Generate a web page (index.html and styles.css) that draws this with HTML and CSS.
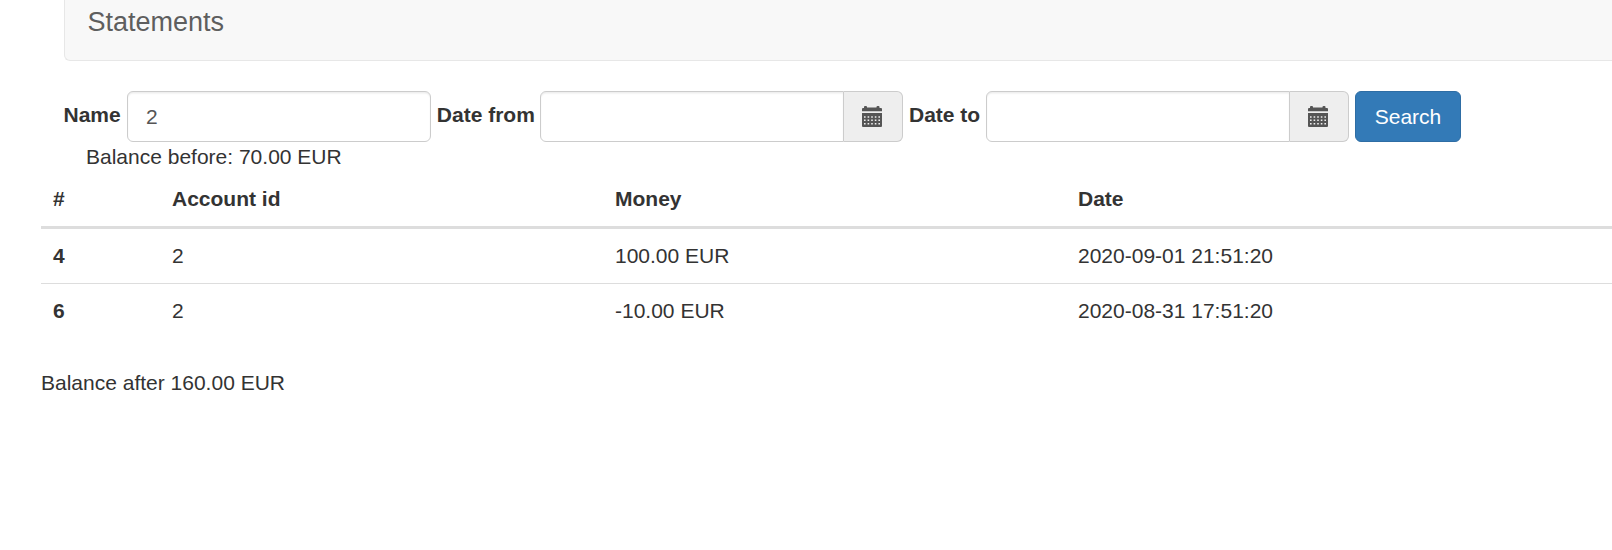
FILE: index.html
```html
<!DOCTYPE html>
<html lang="en">
<head>
<meta charset="utf-8">
<title>Statements</title>
<link rel="stylesheet" href="styles.css">
</head>
<body>
<svg class="sprite" width="0" height="0" aria-hidden="true">
  <symbol id="calendar" viewBox="0 0 20 21">
    <path d="M0 5.200V3Q0 2 1 2H2V1Q2 0 3 0H4Q5 0 5 1V1.500H14.500V1Q14.500 0 15.500 0H16.500Q17.500 0 17.500 1V2H19Q20 2 20 3V5.200Z"/>
    <path fill-rule="evenodd" d="M0 7H20V20Q20 21 19 21H1Q0 21 0 20ZM2 10.200V11.800H3.600V10.200ZM5.600 10.200V11.800H7.200V10.200ZM9.200 10.200V11.800H10.800V10.200ZM12.800 10.200V11.800H14.400V10.200ZM16.400 10.200V11.800H18V10.200ZM2 13.500V15.100H3.600V13.500ZM5.600 13.500V15.100H7.200V13.500ZM9.200 13.500V15.100H10.800V13.500ZM12.800 13.500V15.100H14.400V13.500ZM16.400 13.500V15.100H18V13.500ZM2 17V18.600H3.600V17ZM5.600 17V18.600H7.200V17ZM9.200 17V18.600H10.800V17ZM12.800 17V18.600H14.400V17ZM16.400 17V18.600H18V17Z"/>
  </symbol>
</svg>
<nav class="navbar"><span class="brand">Statements</span></nav>
<form class="filters">
  <label class="label label-name" for="name">Name</label>
  <input class="input" id="name" type="text" value="2">
  <label class="label label-from" for="from">Date from</label>
  <div class="group">
    <input class="input" id="from" type="text">
    <span class="addon"><svg class="icon"><use href="#calendar"/></svg></span>
  </div>
  <label class="label label-to" for="to">Date to</label>
  <div class="group">
    <input class="input" id="to" type="text">
    <span class="addon"><svg class="icon"><use href="#calendar"/></svg></span>
  </div>
  <button class="button" type="button">Search</button>
</form>
<div class="before">Balance before: 70.00 EUR</div>
<table class="table">
  <colgroup><col class="col-id"><col class="col-account"><col class="col-money"><col></colgroup>
  <thead>
    <tr><th>#</th><th>Account id</th><th>Money</th><th>Date</th></tr>
  </thead>
  <tbody>
    <tr><th>4</th><td>2</td><td>100.00 EUR</td><td>2020-09-01 21:51:20</td></tr>
    <tr><th>6</th><td>2</td><td>-10.00 EUR</td><td>2020-08-31 17:51:20</td></tr>
  </tbody>
</table>
<div class="after">Balance after 160.00 EUR</div>
</body>
</html>
```

FILE: styles.css
```css
* { box-sizing: border-box; }
body {
  margin: 0;
  background: #fff;
  color: #333;
  font: 21px/30px "Liberation Sans", Arial, sans-serif;
}
.sprite { display: block; }
.navbar {
  height: 61px;
  margin-left: 64px;
  padding: 7px 0 0 22.400px;
  background: #f8f8f8;
  border: 1px solid #e7e7e7;
  border-width: 0 0 1px 1px;
  border-bottom-left-radius: 6px;
}
.brand { font-size: 27px; color: #5e5e5e; }
.filters {
  display: flex;
  height: 51px;
  margin: 30px 0 0 63.500px;
}
.label { flex: none; padding-top: 9px; font-weight: 700; white-space: nowrap; }
.label-name { width: 63.500px; }
.label-from { width: 109px; padding-left: 5.800px; }
.label-to { width: 83px; padding-left: 6px; }
.input {
  flex: none;
  width: 304px;
  height: 51px;
  padding: 9px 18px;
  border: 1px solid #ccc;
  border-radius: 6px;
  background: #fff;
  box-shadow: inset 0 1.500px 1.500px rgba(0, 0, 0, .075);
  color: #555;
  font: inherit;
}
.group { display: flex; flex: none; width: 363px; }
.group .input { border-radius: 6px 0 0 6px; }
.addon {
  display: flex;
  align-items: center;
  justify-content: center;
  width: 59px;
  padding-right: 2px;
  background: #eee;
  border: 1px solid #ccc;
  border-left: 0;
  border-radius: 0 6px 6px 0;
}
.icon { width: 20px; height: 21px; fill: #555; }
.button {
  width: 106px;
  height: 51px;
  margin-left: 6px;
  padding: 0;
  border: 1px solid #2e6da4;
  border-radius: 6px;
  background: #337ab7;
  color: #fff;
  font: inherit;
}
.before { padding-left: 86px; }
.table {
  width: calc(100% - 41px);
  margin-left: 41px;
  table-layout: fixed;
  border-spacing: 0;
  text-align: left;
}
.table th, .table td { padding: 12px; }
.table thead th { border-bottom: 3px solid #ddd; }
.table tbody tr + tr > * { border-top: 1px solid #ddd; }
.col-id { width: 119px; }
.col-account { width: 443px; }
.col-money { width: 463px; }
.after { padding: 30px 0 0 41px; }
```
